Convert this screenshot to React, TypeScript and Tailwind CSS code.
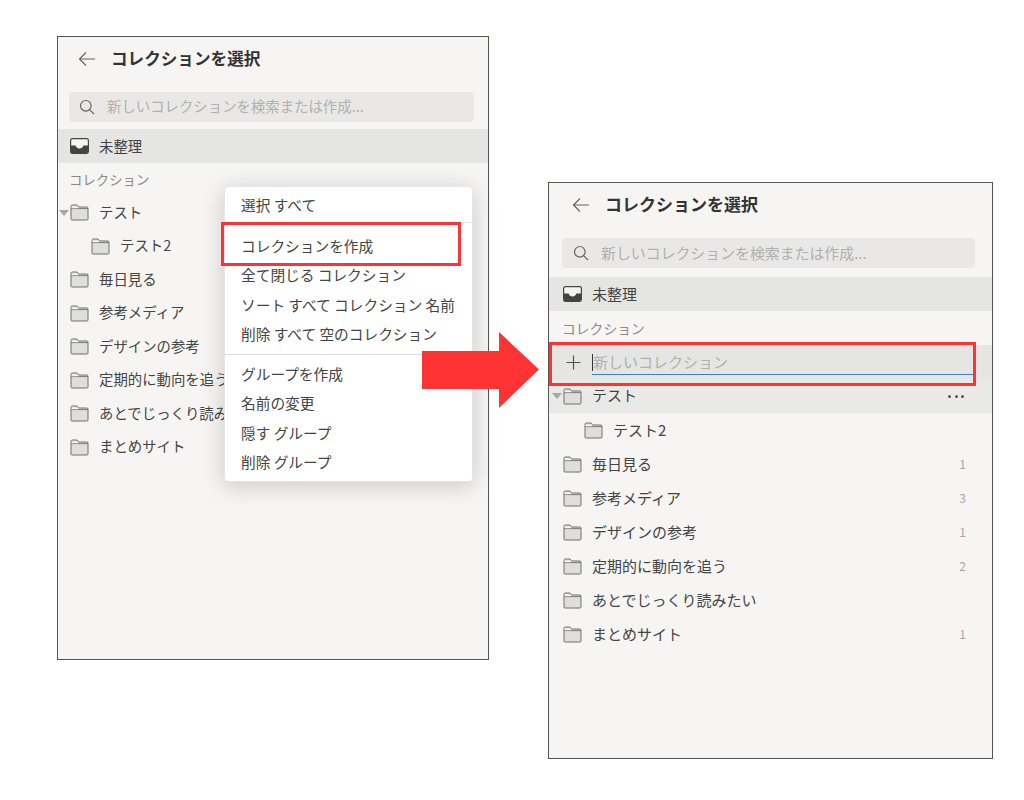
import React from "react";

const font = { fontFamily: '"Noto Sans CJK JP", "Noto Sans", sans-serif' };

function Folder() {
  return (
    <svg width="19" height="17" viewBox="0 0 19 17" className="shrink-0">
      <path d="M1 15.5V2.2C1 1.5 1.5 1 2.2 1H7l1.6 2H17c.6 0 1 .5 1 1.1V15c0 .6-.4 1-1 1H2c-.6 0-1-.4-1-.5z" fill="#dededc" stroke="#707070" strokeWidth="1" />
      <path d="M1 4.600H18" stroke="#707070" strokeWidth="0.9" />
      <path d="M1.600 3.400H8" stroke="#f5f4f2" strokeWidth="1.600" />
    </svg>
  );
}

function Inbox() {
  return (
    <svg width="19" height="16" viewBox="0 0 19 16" className="shrink-0">
      <rect x="0.600" y="0.600" width="17.800" height="14.800" rx="1.800" fill="#f5f4f2" stroke="#444" strokeWidth="1.200" />
      <path d="M1 7.500h4.600c.6 2 2 3 3.900 3s3.300-1 3.900-3H18v6.600c0 .7-.5 1.200-1.200 1.200H2.200C1.500 15.300 1 14.800 1 14.100z" fill="#444" />
    </svg>
  );
}

function Back() {
  return (
    <svg width="18" height="16" viewBox="0 0 18 16" fill="none" stroke="#666" strokeWidth="1.200" className="shrink-0">
      <path d="M17 8H1.500M8 1.500 1.500 8 8 14.500" />
    </svg>
  );
}

function Search() {
  return (
    <svg width="16" height="16" viewBox="0 0 16 16" fill="none" stroke="#666" strokeWidth="1.200" className="shrink-0">
      <circle cx="6.800" cy="6.800" r="5.300" />
      <path d="m10.800 10.800 4.200 4.200" />
    </svg>
  );
}

function Caret() {
  return <span className="w-0 h-0 border-x-[5px] border-x-transparent border-t-[6px] border-t-[#a8a8a8]" />;
}

function Row({ name, indent, caret }: { name: string; indent?: boolean; caret?: boolean }) {
  return (
    <div className={`flex items-center h-[33.500px] ${indent ? "pl-[33px]" : "pl-[12px]"} pr-5 relative`}>
      {caret && (
        <span className="absolute left-[1px] top-1/2 -translate-y-1/2 flex">
          <Caret />
        </span>
      )}
      <Folder />
      <span className="ml-[10px] pb-[2px] text-[14.400px] text-[#444] whitespace-nowrap">{name}</span>
    </div>
  );
}

const rest: [string, string][] = [
  ["毎日見る", "1"],
  ["参考メディア", "3"],
  ["デザインの参考", "1"],
  ["定期的に動向を追う", "2"],
  ["あとでじっくり読みたい", ""],
  ["まとめサイト", "1"],
];

function MenuItem({ label }: { label: string }) {
  return <div className="h-[29.500px] flex items-center px-4 text-[14.700px] text-[#444] whitespace-nowrap">{label}</div>;
}

export default function App() {
  return (
    <div className="relative w-[1024px] h-[800px] bg-white overflow-hidden" style={font}>
      {/* Left window */}
      <section className="absolute left-[57px] top-[36px] w-[432px] h-[624px] bg-[#f6f5f3] border border-[#555] overflow-hidden">
        <header className="flex items-center h-[43px] pl-[20px] gap-[15px]">
          <Back />
          <h2 className="text-[16.600px] font-bold text-[#333]">コレクションを選択</h2>
        </header>
        <div className="ml-[11px] mr-[14px] mt-[12px] h-[30px] rounded bg-[#e9e8e6] flex items-center pl-[10px] gap-[12px]">
          <Search />
          <span className="pb-[2px] text-[14.400px] text-[#b0b0ae]">新しいコレクションを検索または作成...</span>
        </div>
        <div className="mt-[7px] h-[34px] bg-[#e5e5e4] flex items-center pl-[12px] gap-[10px]">
          <Inbox />
          <span className="pb-[1px] text-[14.400px] text-[#444]">未整理</span>
        </div>
        <div className="h-[33px] flex items-center pl-[11px] text-[13.400px] text-[#8a8a8a]">コレクション</div>
        <Row name="テスト" caret />
        <Row name="テスト2" indent />
        {rest.map(([n]) => (
          <Row key={n} name={n} />
        ))}
      </section>

      {/* Context menu */}
      <div className="absolute left-[224px] top-[186px] w-[249px] h-[296px] bg-white rounded border border-[#e6e6e6] shadow-[0_4px_24px_rgba(0,0,0,0.18)] pb-1 pt-[3px]">
        <MenuItem label="選択 すべて" />
        <div className="h-px bg-[#e4e4e4] mt-[2.500px] mb-[3px]" />
        <div className="h-[5px]" />
        <MenuItem label="コレクションを作成" />
        <MenuItem label="全て閉じる コレクション" />
        <MenuItem label="ソート すべて コレクション 名前" />
        <MenuItem label="削除 すべて 空のコレクション" />
        <div className="h-px bg-[#dcdcdc] mt-[5px] mb-[4px]" />
        <MenuItem label="グループを作成" />
        <MenuItem label="名前の変更" />
        <MenuItem label="隠す グループ" />
        <MenuItem label="削除 グループ" />
      </div>
      <div className="absolute left-[221px] top-[222px] w-[240px] h-[44px] border-[3.500px] border-[#ff3333]" />

      {/* Right window */}
      <section className="absolute left-[548px] top-[182px] w-[445px] h-[577px] bg-[#f6f5f3] border border-[#555] overflow-hidden">
        <header className="flex items-center h-[43px] pl-[23px] gap-[15px]">
          <Back />
          <h2 className="pb-[2px] text-[17px] font-bold text-[#333]">コレクションを選択</h2>
        </header>
        <div className="ml-[13px] mr-[17px] mt-[12px] h-[30px] rounded bg-[#e9e8e6] flex items-center pl-[11px] gap-[12px]">
          <Search />
          <span className="text-[14.900px] text-[#b0b0ae]">新しいコレクションを検索または作成...</span>
        </div>
        <div className="mt-[9px] h-[34px] bg-[#e5e5e4] flex items-center pl-[14px] gap-[10px]">
          <Inbox />
          <span className="text-[15px] text-[#444]">未整理</span>
        </div>
        <div className="h-[34px] flex items-center pl-[13px] text-[13.800px] text-[#8a8a8a]">コレクション</div>
        <div className="h-[34px] bg-[#e5e5e4] flex items-center pl-[17px] pr-[19px]">
          <svg width="15" height="15" viewBox="0 0 15 15" stroke="#555" strokeWidth="1.200" className="shrink-0">
            <path d="M7.500 0.500v14M0.500 7.500h14" />
          </svg>
          <div className="ml-[11px] flex-1 h-[26px] flex items-center pt-[2px] border-b border-[#3b82c4] text-[15px] text-[#b0b0ae]">
            <span className="w-px h-[17px] bg-[#333]" />
            新しいコレクション
          </div>
        </div>
        <div className="h-[34px] bg-[#e9e9e8] flex items-center relative pl-[14px] pr-[28px]">
          <span className="absolute left-[3px] top-1/2 -translate-y-1/2 flex">
            <Caret />
          </span>
          <Folder />
          <span className="ml-[10px] pb-[1px] text-[15px] text-[#444]">テスト</span>
          <span className="ml-auto flex gap-[3.500px]">
            <span className="w-[3px] h-[3px] rounded-full bg-[#555]" />
            <span className="w-[3px] h-[3px] rounded-full bg-[#555]" />
            <span className="w-[3px] h-[3px] rounded-full bg-[#555]" />
          </span>
        </div>
        <div className="flex items-center h-[34px] pl-[35px]">
          <Folder />
          <span className="ml-[10px] text-[15px] text-[#444]">テスト2</span>
        </div>
        {rest.map(([n, c]) => (
          <div key={n} className="flex items-center h-[34px] pl-[14px] pr-[26px]">
            <Folder />
            <span className="ml-[10px] text-[15px] text-[#444]">{n}</span>
            {c && <span className="ml-auto text-[12px] text-[#a5a5a5]">{c}</span>}
          </div>
        ))}
      </section>
      <div className="absolute left-[549px] top-[342px] w-[427px] h-[44px] border-[3.500px] border-[#ff3333]" />

      {/* Arrow */}
      <svg width="117" height="76" viewBox="0 0 117 76" className="absolute left-[422px] top-[332px]">
        <path d="M0 19H77V0L117 37.500 77 76V57H0z" fill="#ff3333" />
      </svg>
    </div>
  );
}
